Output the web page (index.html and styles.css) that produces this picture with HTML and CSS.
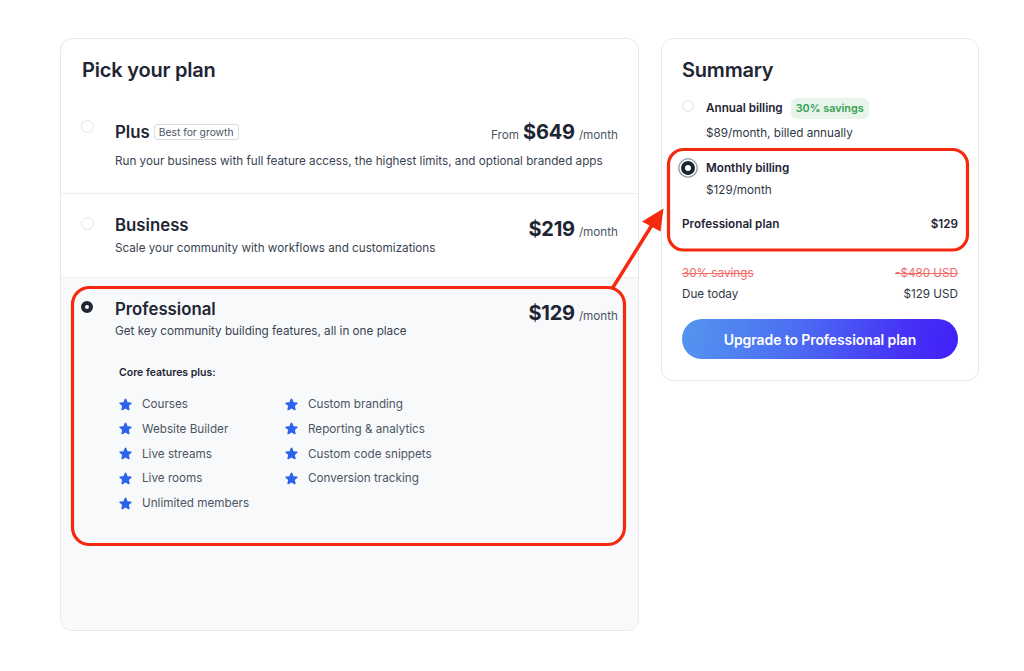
FILE: index.html
```html
<!DOCTYPE html>
<html lang="en">
<head>
<meta charset="utf-8">
<title>Pick your plan</title>
<link rel="stylesheet" href="styles.css">
</head>
<body>
<div class="page">
  <section class="plans">
    <div class="plans-head"><h2 class="card-title">Pick your plan</h2></div>

    <div class="plan plan-plus">
      <span class="radio"></span>
      <div class="plan-main">
        <div class="plan-head">
          <div class="plan-name">Plus <span class="tag">Best for growth</span></div>
          <div class="price"><span class="from">From</span><span class="amount">$649</span><span class="per">/month</span></div>
        </div>
        <p class="plan-desc plan-desc-gap">Run your business with full feature access, the highest limits, and optional branded apps</p>
      </div>
    </div>

    <div class="plan plan-business">
      <span class="radio radio-low"></span>
      <div class="plan-main">
        <div class="plan-head">
          <div class="plan-name">Business</div>
          <div class="price price-low"><span class="amount">$219</span><span class="per">/month</span></div>
        </div>
        <p class="plan-desc plan-desc-nudge">Scale your community with workflows and customizations</p>
      </div>
    </div>

    <div class="plan plan-pro">
      <span class="radio radio-low radio-on"></span>
      <div class="plan-main">
        <div class="plan-head">
          <div class="plan-name">Professional</div>
          <div class="price price-low"><span class="amount">$129</span><span class="per">/month</span></div>
        </div>
        <p class="plan-desc">Get key community building features, all in one place</p>
        <div class="features">
          <p class="features-title">Core features plus:</p>
          <ul class="feature-grid">
            <li><svg class="star" viewBox="0 0 24 24"><path d="M10.788 3.21c.448-1.077 1.976-1.077 2.424 0l2.082 5.007 5.404.433c1.164.093 1.636 1.545.749 2.305l-4.117 3.527 1.257 5.273c.271 1.136-.964 2.033-1.96 1.425L12 18.354 7.373 21.18c-.996.608-2.231-.29-1.96-1.425l1.257-5.273-4.117-3.527c-.887-.76-.415-2.212.749-2.305l5.404-.433 2.082-5.006z"/></svg>Courses</li>
            <li><svg class="star" viewBox="0 0 24 24"><path d="M10.788 3.21c.448-1.077 1.976-1.077 2.424 0l2.082 5.007 5.404.433c1.164.093 1.636 1.545.749 2.305l-4.117 3.527 1.257 5.273c.271 1.136-.964 2.033-1.96 1.425L12 18.354 7.373 21.18c-.996.608-2.231-.29-1.96-1.425l1.257-5.273-4.117-3.527c-.887-.76-.415-2.212.749-2.305l5.404-.433 2.082-5.006z"/></svg>Website Builder</li>
            <li><svg class="star" viewBox="0 0 24 24"><path d="M10.788 3.21c.448-1.077 1.976-1.077 2.424 0l2.082 5.007 5.404.433c1.164.093 1.636 1.545.749 2.305l-4.117 3.527 1.257 5.273c.271 1.136-.964 2.033-1.96 1.425L12 18.354 7.373 21.18c-.996.608-2.231-.29-1.96-1.425l1.257-5.273-4.117-3.527c-.887-.76-.415-2.212.749-2.305l5.404-.433 2.082-5.006z"/></svg>Live streams</li>
            <li><svg class="star" viewBox="0 0 24 24"><path d="M10.788 3.21c.448-1.077 1.976-1.077 2.424 0l2.082 5.007 5.404.433c1.164.093 1.636 1.545.749 2.305l-4.117 3.527 1.257 5.273c.271 1.136-.964 2.033-1.96 1.425L12 18.354 7.373 21.18c-.996.608-2.231-.29-1.96-1.425l1.257-5.273-4.117-3.527c-.887-.76-.415-2.212.749-2.305l5.404-.433 2.082-5.006z"/></svg>Live rooms</li>
            <li><svg class="star" viewBox="0 0 24 24"><path d="M10.788 3.21c.448-1.077 1.976-1.077 2.424 0l2.082 5.007 5.404.433c1.164.093 1.636 1.545.749 2.305l-4.117 3.527 1.257 5.273c.271 1.136-.964 2.033-1.96 1.425L12 18.354 7.373 21.18c-.996.608-2.231-.29-1.96-1.425l1.257-5.273-4.117-3.527c-.887-.76-.415-2.212.749-2.305l5.404-.433 2.082-5.006z"/></svg>Unlimited members</li>
            <li><svg class="star" viewBox="0 0 24 24"><path d="M10.788 3.21c.448-1.077 1.976-1.077 2.424 0l2.082 5.007 5.404.433c1.164.093 1.636 1.545.749 2.305l-4.117 3.527 1.257 5.273c.271 1.136-.964 2.033-1.96 1.425L12 18.354 7.373 21.18c-.996.608-2.231-.29-1.96-1.425l1.257-5.273-4.117-3.527c-.887-.76-.415-2.212.749-2.305l5.404-.433 2.082-5.006z"/></svg>Custom branding</li>
            <li><svg class="star" viewBox="0 0 24 24"><path d="M10.788 3.21c.448-1.077 1.976-1.077 2.424 0l2.082 5.007 5.404.433c1.164.093 1.636 1.545.749 2.305l-4.117 3.527 1.257 5.273c.271 1.136-.964 2.033-1.96 1.425L12 18.354 7.373 21.18c-.996.608-2.231-.29-1.96-1.425l1.257-5.273-4.117-3.527c-.887-.76-.415-2.212.749-2.305l5.404-.433 2.082-5.006z"/></svg>Reporting &amp; analytics</li>
            <li><svg class="star" viewBox="0 0 24 24"><path d="M10.788 3.21c.448-1.077 1.976-1.077 2.424 0l2.082 5.007 5.404.433c1.164.093 1.636 1.545.749 2.305l-4.117 3.527 1.257 5.273c.271 1.136-.964 2.033-1.96 1.425L12 18.354 7.373 21.18c-.996.608-2.231-.29-1.96-1.425l1.257-5.273-4.117-3.527c-.887-.76-.415-2.212.749-2.305l5.404-.433 2.082-5.006z"/></svg>Custom code snippets</li>
            <li><svg class="star" viewBox="0 0 24 24"><path d="M10.788 3.21c.448-1.077 1.976-1.077 2.424 0l2.082 5.007 5.404.433c1.164.093 1.636 1.545.749 2.305l-4.117 3.527 1.257 5.273c.271 1.136-.964 2.033-1.96 1.425L12 18.354 7.373 21.18c-.996.608-2.231-.29-1.96-1.425l1.257-5.273-4.117-3.527c-.887-.76-.415-2.212.749-2.305l5.404-.433 2.082-5.006z"/></svg>Conversion tracking</li>
          </ul>
        </div>
      </div>
    </div>
  </section>

  <aside class="summary">
    <h2 class="card-title">Summary</h2>

    <div class="bill bill-annual">
      <div class="bill-head">
        <span class="radio radio-small"></span>
        <span class="bill-name">Annual billing</span>
        <span class="savings">30% savings</span>
      </div>
      <p class="bill-sub bill-sub-annual">$89/month, billed annually</p>
    </div>

    <div class="bill bill-monthly">
      <div class="bill-head">
        <span class="radio radio-focus"></span>
        <span class="bill-name">Monthly billing</span>
      </div>
      <p class="bill-sub bill-sub-monthly">$129/month</p>
    </div>

    <div class="line line-plan"><span>Professional plan</span><span>$129</span></div>
    <div class="line line-strike"><span>30% savings</span><span>-$480 USD</span></div>
    <div class="line line-due"><span>Due today</span><span>$129 USD</span></div>

    <button class="upgrade" type="button">Upgrade to Professional plan</button>
  </aside>

  <svg class="marks" viewBox="0 0 1024 671" width="1024" height="671" aria-hidden="true">
    <rect x="72.5" y="287.5" width="552" height="257" rx="17" />
    <rect x="668.5" y="149.5" width="299" height="100.5" rx="15" />
    <line x1="612" y1="289" x2="652" y2="225" />
    <polygon points="642,221.5 663.5,208.5 660.5,231.5" />
  </svg>
</div>
</body>
</html>
```

FILE: styles.css
```css
* { box-sizing: border-box; }

html, body {
  margin: 0;
  padding: 0;
  background: #ffffff;
}

body {
  font-family: Inter, "Noto Sans", "Liberation Sans", sans-serif;
  color: #1e2533;
  -webkit-font-smoothing: antialiased;
}

p, h2, ul { margin: 0; padding: 0; }

.page {
  position: relative;
  display: flex;
  align-items: flex-start;
  gap: 22px;
  padding: 38px 0 0 60px;
  width: 1024px;
  height: 671px;
}

.card-title {
  font-size: 20px;
  line-height: 24px;
  font-weight: 600;
  color: #1e2533;
  letter-spacing: -0.2px;
}

/* ---------- left card ---------- */
.plans {
  width: 579px;
  height: 593px;
  border: 1px solid #e6e8ec;
  border-radius: 12px;
  overflow: hidden;
  display: flex;
  flex-direction: column;
  background: #ffffff;
}

.plans-head {
  padding: 19px 21px 18px;
}

.plan {
  display: flex;
  align-items: flex-start;
  padding: 20px 20px 22px 20px;
  border-bottom: 1px solid #eceef1;
}

.plan-business {
  padding-top: 19px;
  padding-bottom: 19px;
}

.plan-pro {
  flex: 1;
  padding-top: 19px;
  background: #f8f9fb;
  border-bottom: none;
}

.radio {
  flex: none;
  width: 13px;
  height: 13px;
  border-radius: 50%;
  border: 1px solid #e3e5e9;
  background: #ffffff;
  margin-right: 21px;
}

.radio-low { margin-top: 4px; }

.radio-on {
  width: 12px;
  height: 12px;
  border: 4px solid #1e2533;
  margin-right: 22px;
}

.plan-main {
  flex: 1;
  min-width: 0;
}

.plan-head {
  display: flex;
  align-items: flex-start;
  justify-content: space-between;
  height: 24px;
}

.plan-name {
  display: flex;
  align-items: center;
  gap: 4px;
  font-size: 16.8px;
  line-height: 24px;
  font-weight: 600;
  color: #1e2533;
}

.tag {
  font-size: 10.3px;
  line-height: 14px;
  font-weight: 400;
  color: #4b5563;
  border: 1px solid #d9dce1;
  border-radius: 3px;
  padding: 0 4px;
}

.plan-desc {
  font-size: 11.7px;
  line-height: 20px;
  color: #3a4352;
}

.plan-desc-gap { margin-top: 7px; }

.plan-desc-nudge { margin-top: 1px; }

.price {
  flex: none;
  display: flex;
  align-items: baseline;
  gap: 4px;
  height: 24px;
  white-space: nowrap;
  color: #4b5563;
}

.price-low {
  margin-top: 4px;
}

.from, .per {
  font-size: 11.7px;
  line-height: 14px;
}

.amount {
  font-size: 20px;
  line-height: 24px;
  font-weight: 700;
  color: #1e2533;
  letter-spacing: -0.2px;
}

.features {
  margin: 24px 0 0 4px;
}

.features-title {
  font-size: 10.5px;
  line-height: 16px;
  font-weight: 600;
  color: #1e2533;
}

.feature-grid {
  list-style: none;
  margin-top: 13px;
  display: grid;
  grid-template-rows: repeat(5, 20px);
  grid-auto-flow: column;
  grid-auto-columns: 166px;
  row-gap: 4.75px;
}

.feature-grid li {
  display: flex;
  align-items: center;
  gap: 9px;
  font-size: 11.7px;
  line-height: 20px;
  color: #4b5563;
}

.star {
  width: 15px;
  height: 15px;
  flex: none;
  fill: #2b63ec;
  margin-left: -1px;
}

/* ---------- right card ---------- */
.summary {
  width: 318px;
  border: 1px solid #e6e8ec;
  border-radius: 12px;
  padding: 19px 20px 21px 20px;
  background: #ffffff;
}

.bill-head {
  display: flex;
  align-items: center;
  height: 22px;
}

.bill-annual { margin-top: 15px; }

.bill-monthly { margin-top: 14px; }

.radio-small {
  width: 12px;
  height: 12px;
  margin-right: 12px;
  margin-top: -4px;
}

.radio-focus {
  width: 14px;
  height: 14px;
  border: 4.5px solid #1e2533;
  margin-left: -1px;
  margin-right: 11px;
  box-shadow: 0 0 0 1.5px #ffffff, 0 0 0 3px #9ba2ad;
}

.bill-name {
  font-size: 11.7px;
  font-weight: 600;
  color: #1e2533;
}

.savings {
  margin-left: 8px;
  height: 21px;
  line-height: 21px;
  padding: 0 5px;
  border-radius: 6px;
  background: #e7f4ea;
  color: #36a153;
  font-size: 10.8px;
  font-weight: 600;
}

.bill-sub {
  margin-left: 24px;
  font-size: 11.7px;
  line-height: 20px;
  color: #2f3846;
}

.bill-sub-annual { margin-top: 4px; }

.bill-sub-monthly { margin-top: 1px; }

.line {
  display: flex;
  justify-content: space-between;
  font-size: 11.7px;
  line-height: 20px;
  color: #2f3846;
}

.line-plan {
  margin-top: 14px;
  font-weight: 600;
  color: #1e2533;
}

.line-strike {
  margin-top: 29px;
  color: #f26b6b;
  text-decoration: line-through;
}

.line-due { margin-top: 1px; }

.upgrade {
  display: block;
  width: 100%;
  height: 40px;
  margin-top: 15px;
  border: none;
  border-radius: 20px;
  background: linear-gradient(100deg, #5495ef 0%, #4c6ff2 40%, #4632f6 80%, #4120f8 100%);
  color: #ffffff;
  font-family: Inter, "Noto Sans", "Liberation Sans", sans-serif;
  font-size: 14px;
  font-weight: 600;
  letter-spacing: -0.1px;
}

/* ---------- annotation overlay ---------- */
.marks {
  position: absolute;
  top: 0;
  left: 0;
  pointer-events: none;
}

.marks rect {
  fill: none;
  stroke: #f5290d;
  stroke-width: 3.2;
}

.marks line {
  stroke: #f5290d;
  stroke-width: 3.5;
}

.marks polygon {
  fill: #f5290d;
}
```
